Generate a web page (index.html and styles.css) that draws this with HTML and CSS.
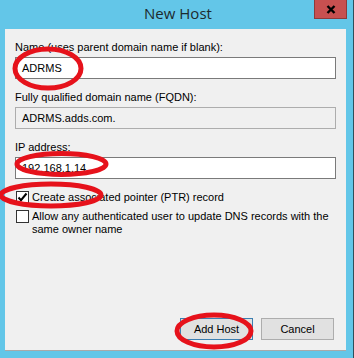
FILE: index.html
```html
<!DOCTYPE html>
<html>
<head>
<meta charset="utf-8">
<link rel="stylesheet" href="styles.css">
</head>
<body>
<div class="window">
  <div class="titlebar">
    <div class="title">New Host</div>
    <div class="close">
      <svg width="10" height="9" viewBox="0 0 10 9"><path d="M1.5 1 L8.5 8 M8.5 1 L1.5 8" stroke="#000" stroke-width="2.4" stroke-linecap="butt"/></svg>
    </div>
  </div>
  <div class="client">
    <div class="label">Name (uses parent domain name if blank):</div>
    <div class="field">ADRMS</div>
    <div class="label">Fully qualified domain name (FQDN):</div>
    <div class="field disabled">ADRMS.adds.com.</div>
    <div class="label">IP address:</div>
    <div class="field">192.168.1.14</div>
    <div class="check-row first">
      <span class="box"><svg width="11" height="11" viewBox="0 0 11 11"><path d="M1.5 5.5 L4 8.2 L9.5 1.5" fill="none" stroke="#000" stroke-width="2"/></svg></span>
      <span class="check-label">Create associated pointer (PTR) record</span>
    </div>
    <div class="check-row">
      <span class="box"></span>
      <span class="check-label">Allow any authenticated user to update DNS records with the same owner name</span>
    </div>
    <div class="buttons">
      <div class="btn default">Add Host</div>
      <div class="btn">Cancel</div>
    </div>
  </div>
  <svg class="marks" width="354" height="358" viewBox="0 0 354 358">
    <g fill="none" stroke="#e6121b" stroke-width="5">
      <ellipse cx="48" cy="68.5" rx="33" ry="19.5"/>
      <ellipse cx="61.5" cy="164" rx="44.5" ry="10.5"/>
      <ellipse cx="51" cy="195" rx="50" ry="11"/>
      <ellipse cx="214" cy="331" rx="37" ry="16"/>
    </g>
  </svg>
</div>
</body>
</html>
```

FILE: styles.css
```css
* { box-sizing: border-box; }
html, body {
  margin: 0;
  padding: 0;
  background: #63c6e8;
}
.window {
  position: relative;
  width: 354px;
  height: 358px;
  background: #63c6e8;
  border-right: 1px solid #2f4f5a;
  display: flex;
  flex-direction: column;
  font-family: "Liberation Sans", Arial, sans-serif;
  font-size: 11px;
  color: #000;
}
.titlebar {
  position: relative;
  height: 29px;
  flex: none;
  display: flex;
  justify-content: center;
}
.title {
  font-family: "Open Sans", "Noto Sans", sans-serif;
  font-size: 15px;
  line-height: 26px;
  color: #1d2a2e;
  padding-left: 3px;
}
.close {
  position: absolute;
  top: 0;
  right: 6px;
  width: 33px;
  height: 19px;
  background: #c75050;
  border: 1px solid #8e3a3a;
  border-top: none;
  display: flex;
  align-items: center;
  justify-content: center;
}
.close svg { display: block; }
.client {
  margin: 0 7px 7px 5px;
  flex: 1;
  background: #f0f0f0;
  border-bottom: 1px solid #a9a9a9;
  padding: 12px 10px 10px 10px;
  display: flex;
  flex-direction: column;
}
.label {
  height: 13px;
  line-height: 13px;
  margin-bottom: 3px;
  white-space: nowrap;
}
.field {
  height: 22px;
  line-height: 20px;
  border: 1px solid #7a7a7a;
  background: #fff;
  padding-left: 6px;
  margin-bottom: 12px;
}
.field.disabled {
  background: #f0f0f0;
  border-color: #adadad;
}
.check-row {
  display: flex;
  align-items: flex-start;
  padding-left: 1px;
  margin-top: -2px;
}
.check-row.first {
  margin-top: 0;
  margin-bottom: 8px;
}
.box {
  flex: none;
  width: 13px;
  height: 13px;
  border: 1px solid #333;
  background: #fff;
  display: flex;
  align-items: center;
  justify-content: center;
}
.box svg { display: block; }
.check-label {
  margin-left: 3px;
  line-height: 12.5px;
  margin-top: 0;
}
.buttons {
  margin-top: auto;
  display: flex;
  justify-content: flex-end;
  gap: 8px;
  padding-right: 2px;
}
.btn {
  width: 73px;
  height: 22px;
  line-height: 20px;
  text-align: center;
  background: #e1e1e1;
  border: 1px solid #adadad;
}
.btn.default {
  border-color: #3c7fb1;
}
.marks {
  position: absolute;
  left: 0;
  top: 0;
  pointer-events: none;
}
```
